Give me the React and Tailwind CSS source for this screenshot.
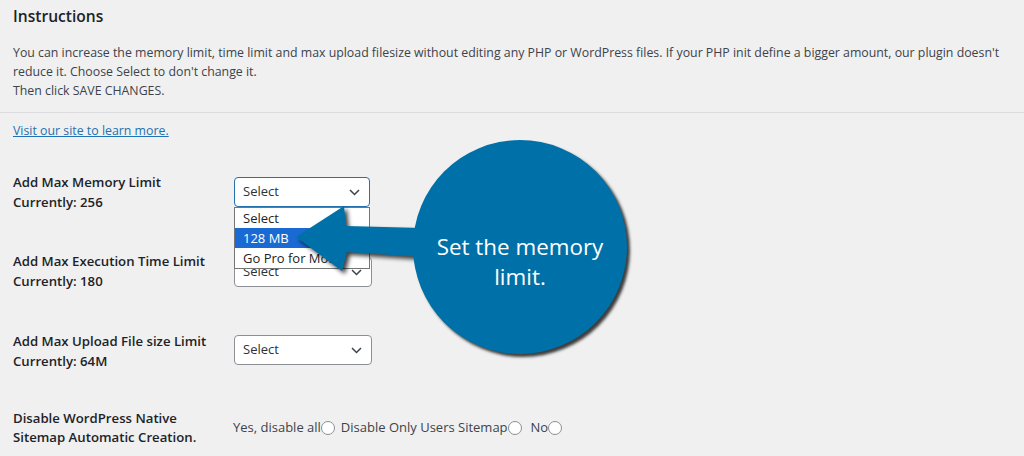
import React from 'react'

const Chevron = () => (
  <svg width="11" height="7" viewBox="0 0 11 7" fill="none">
    <path d="M1 1l4.5 4.5L10 1" stroke="#3c434a" strokeWidth="1.5" />
  </svg>
)

const SelectBox = ({ focused }) => (
  <div
    className={
      'flex h-[30px] items-center justify-between rounded-[4px] border bg-white pl-[8px] pr-[9px] ' +
      (focused ? 'w-[136px] border-[#2271b1]' : 'w-[138px] border-[#8c8f94]')
    }
  >
    <span className="text-[#2c3338]">Select</span>
    <Chevron />
  </div>
)

const Radio = () => (
  <span className="inline-block h-[14px] w-[14px] rounded-full border border-[#8c8f94] bg-white" />
)

const Row = ({ label, current, top, selTop, focused }) => (
  <div className="flex items-start" style={{ marginTop: top }}>
    <div className="w-[221px] text-[13.2px] font-semibold leading-[20px]">
      <p>{label}</p>
      <p>{current}</p>
    </div>
    <div style={{ marginTop: selTop }}>
      <SelectBox focused={focused} />
    </div>
  </div>
)

export default function App() {
  return (
    <div className="relative h-[456px] overflow-hidden bg-[#f0f0f1] font-['Open_Sans',sans-serif] text-[13px] text-[#1d2327]">
      <div className="px-[13px] pt-[6px]">
        <h2 className="text-[15.6px] font-semibold leading-[20px]">Instructions</h2>
        <p className="mt-[17px] text-[12.33px] leading-[19px] text-[#3c434a]">
          You can increase the memory limit, time limit and max upload filesize without editing any PHP or WordPress files. If your PHP init define a bigger amount, our plugin doesn't
          <br />
          reduce it. Choose Select to don't change it.
          <br />
          Then click SAVE CHANGES.
        </p>
        <hr className="-mx-[13px] mt-[12px] border-t border-[#dcdcde]" />
        <a href="#" className="mt-[8px] block w-max text-[12.35px] leading-[19px] text-[#2271b1] underline">
          Visit our site to learn more.
        </a>

        <Row label="Add Max Memory Limit" current="Currently: 256" top={32} selTop={5} focused />
        <Row label="Add Max Execution Time Limit" current="Currently: 180" top={39} selTop={6} />
        <Row label="Add Max Upload File size Limit" current="Currently: 64M" top={40} selTop={4} />

        <div className="mt-[38px] flex items-center">
          <div className="w-[220px] text-[13.2px] font-semibold leading-[19px]">
            <p>Disable WordPress Native</p>
            <p>Sitemap Automatic Creation.</p>
          </div>
          <div className="flex items-center text-[#3c434a]">
            <span>Yes, disable all</span>
            <Radio />
            <span className="ml-[6px]">Disable Only Users Sitemap</span>
            <Radio />
            <span className="ml-[9px]">No</span>
            <Radio />
          </div>
        </div>
      </div>

      {/* open dropdown list */}
      <div className="absolute left-[234px] top-[207px] w-[136px] border border-[#767676] bg-white text-[#1d2327]">
        <div className="h-[20px] pl-[8px] leading-[20px]">Select</div>
        <div className="h-[20px] bg-[#1a6ad4] pl-[8px] leading-[20px] text-white">128 MB</div>
        <div className="h-[20px] pl-[8px] leading-[20px]">Go Pro for More</div>
      </div>

      {/* callout arrow */}
      <svg
        className="pointer-events-none absolute left-0 top-0"
        width="1024"
        height="456"
        style={{ filter: 'drop-shadow(3px 3px 2px rgba(0,0,0,0.75))' }}
      >
        <polygon
          points="296,237 344,206 346,226 422,228 422,257 347,252 342,271"
          fill="#0071a8"
        />
      </svg>

      {/* callout circle */}
      <div className="absolute left-[413px] top-[140px] flex h-[214px] w-[214px] items-center justify-center rounded-full bg-[#0071a8] pt-[30px] text-center font-['Open_Sans',sans-serif] text-[22.4px] leading-[30px] text-white shadow-[3px_3px_3px_rgba(0,0,0,0.75)]">
        <p>
          Set the memory
          <br />
          limit.
        </p>
      </div>
    </div>
  )
}
